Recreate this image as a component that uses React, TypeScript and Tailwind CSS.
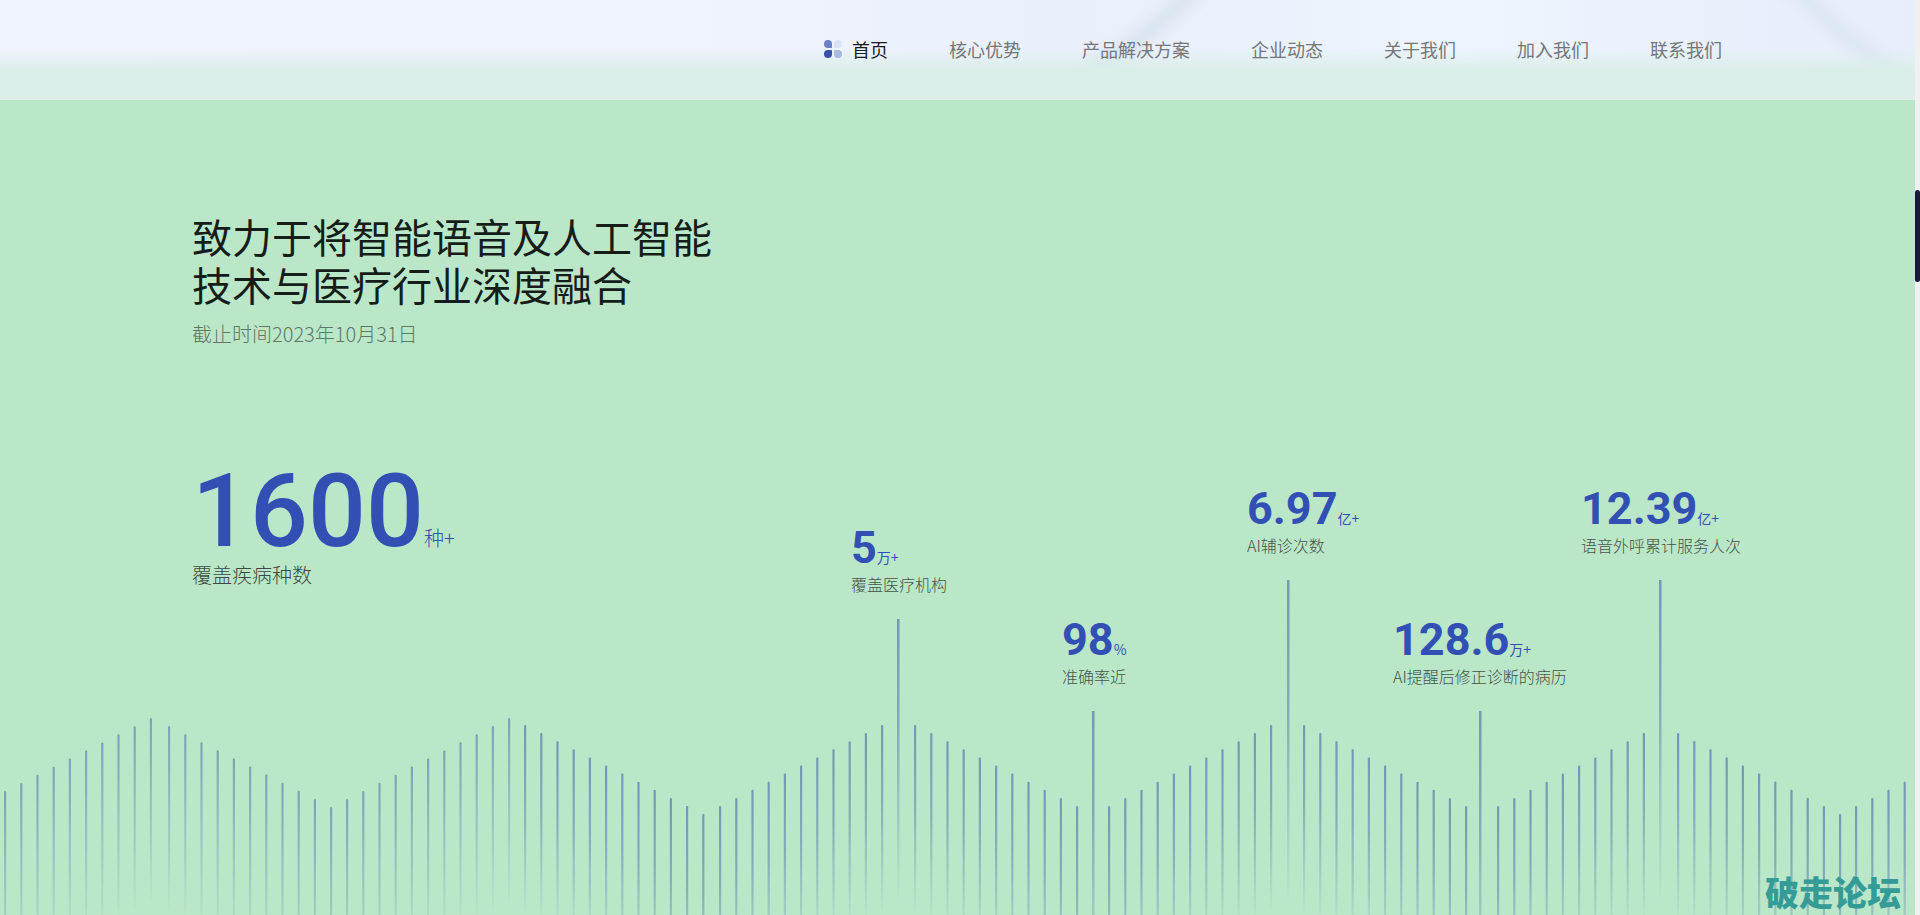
const navItems = ["核心优势", "产品解决方案", "企业动态", "关于我们", "加入我们", "联系我们"];

const stats = [
  { value: "5", unit: "万+", label: "覆盖医疗机构", offset: "pt-[39px]" },
  { value: "98", unit: "%", label: "准确率近", offset: "pt-[131px]" },
  { value: "6.97", unit: "亿+", label: "AI辅诊次数", offset: "pt-0" },
  { value: "128.6", unit: "万+", label: "AI提醒后修正诊断的病历", offset: "pt-[131px]" },
  { value: "12.39", unit: "亿+", label: "语音外呼累计服务人次", offset: "pt-0" },
];

type Run = { x: number; top: number; count: number; dir: 1 | -1; soft?: boolean };

// every run is a slope of the wave: dir -1 climbs, dir 1 falls
const runs: Run[] = [
  { x: 5, top: 211, count: 10, dir: -1, soft: true },
  { x: 169, top: 146, count: 11, dir: 1, soft: true },
  { x: 347, top: 219, count: 11, dir: -1, soft: true },
  { x: 525, top: 145, count: 12, dir: 1 },
  { x: 720, top: 226, count: 11, dir: -1 },
  { x: 915, top: 145, count: 11, dir: 1 },
  { x: 1109, top: 226, count: 11, dir: -1 },
  { x: 1304, top: 145, count: 11, dir: 1 },
  { x: 1498, top: 226, count: 10, dir: -1 },
  { x: 1678, top: 153, count: 11, dir: 1 },
  { x: 1856, top: 226, count: 4, dir: -1 },
];

const markers = [
  { x: 898, top: 39, end: 325 },
  { x: 1093, top: 131, end: 420 },
  { x: 1288, top: 0, end: 325 },
  { x: 1480, top: 131, end: 420 },
  { x: 1660, top: 0, end: 325 },
];

const bars = runs.flatMap((run) =>
  Array.from({ length: run.count }, (_, i) => ({
    x: run.x + i * 16.2,
    top: run.top + run.dir * i * 8.1,
    soft: run.soft,
  }))
);

function NavDots() {
  return (
    <svg width="18" height="18" viewBox="0 0 18 18" aria-hidden="true">
      <path d="M4 0a4 4 0 0 1 4 4v3a1 1 0 0 1-1 1H4a4 4 0 0 1 0-8z" fill="#6c80c4" />
      <path d="M14 0a4 4 0 0 1 0 8h-3a1 1 0 0 1-1-1V4a4 4 0 0 1 4-4z" fill="#dbe2f5" />
      <path d="M4 10h3a1 1 0 0 1 1 1v3a4 4 0 1 1-4-4z" fill="#3a51a9" />
      <path d="M11 10h3a4 4 0 1 1-4 4v-3a1 1 0 0 1 1-1z" fill="#aab7de" />
    </svg>
  );
}

function Wave() {
  return (
    <svg viewBox="0 0 1915 335" className="absolute bottom-0 left-0 w-full" aria-hidden="true">
      <defs>
        <linearGradient id="fade" x1="0" y1="0" x2="0" y2="1">
          <stop offset="0" stopColor="#4264a8" stopOpacity="0.6" />
          <stop offset="0.4" stopColor="#4264a8" stopOpacity="0.45" />
          <stop offset="1" stopColor="#4264a8" stopOpacity="0" />
        </linearGradient>
        <linearGradient id="fadeSoft" x1="0" y1="0" x2="0" y2="1">
          <stop offset="0" stopColor="#4264a8" stopOpacity="0.52" />
          <stop offset="1" stopColor="#4264a8" stopOpacity="0" />
        </linearGradient>
      </defs>
      {bars.map((bar) => (
        <rect key={bar.x} x={bar.x - 1} y={bar.top} width="2.2" height="190" rx="1" fill={bar.soft ? "url(#fadeSoft)" : "url(#fade)"} />
      ))}
      {markers.map((m) => (
        <rect key={m.x} x={m.x - 1} y={m.top} width="2.5" height={m.end - m.top} fill="url(#fade)" />
      ))}
    </svg>
  );
}

function Header() {
  return (
    <header className="relative h-[100px] overflow-hidden bg-[#edf2fd]">
      <svg viewBox="0 0 1915 100" preserveAspectRatio="none" className="absolute inset-0 h-full w-full" aria-hidden="true">
        <defs>
          <linearGradient id="sky" x1="0" y1="0" x2="1" y2="0">
            <stop offset="0" stopColor="#f0f4fe" />
            <stop offset="0.4" stopColor="#eff3fd" />
            <stop offset="0.54" stopColor="#e9f0fc" />
            <stop offset="0.64" stopColor="#eaf1fc" />
            <stop offset="0.76" stopColor="#eef5fe" />
            <stop offset="0.9" stopColor="#e9f0fc" />
            <stop offset="1" stopColor="#e7eefb" />
          </linearGradient>
          <linearGradient id="haze" x1="0" y1="0" x2="0" y2="1">
            <stop offset="0.48" stopColor="#dbeee9" stopOpacity="0" />
            <stop offset="0.7" stopColor="#dbeee9" />
          </linearGradient>
          <filter id="blur" x="-50%" y="-50%" width="200%" height="200%">
            <feGaussianBlur stdDeviation="7" />
          </filter>
        </defs>
        <rect width="1915" height="100" fill="url(#sky)" />
        <path d="M1202-20Q1160 30 1088 75" fill="none" stroke="#d9e4ef" strokeWidth="18" filter="url(#blur)" />
        <path d="M1785-20Q1830 25 1895 75" fill="none" stroke="#dde6f4" strokeWidth="18" filter="url(#blur)" />
        <rect width="1915" height="100" fill="url(#haze)" />
      </svg>
      <nav className="relative flex h-[98px] items-center justify-end gap-x-[61px] whitespace-nowrap pr-[193px] text-lg text-[#747679]">
        <a href="#home" className="flex items-center gap-2.5 text-[#1a1a1a]">
          <NavDots />
          首页
        </a>
        {navItems.map((item) => (
          <a key={item} href={"#" + item}>
            {item}
          </a>
        ))}
      </nav>
    </header>
  );
}

export default function App() {
  return (
    <div className="flex min-h-screen bg-[#bbe7c9] font-['Noto_Sans_CJK_SC',sans-serif]">
      <div className="relative flex min-w-0 flex-1 flex-col">
        <Header />
        <main className="relative flex-1">
          <Wave />
          <div className="relative px-48 pt-28">
            <h1 className="max-w-[530px] text-[40px] leading-[48px] text-[#161d19]">
              致力于将智能语音及人工智能技术与医疗行业深度融合
            </h1>
            <p className="mt-[11px] text-xl font-light leading-[30px] text-[#5f7767]">截止时间2023年10月31日</p>
          </div>
          <div className="relative mt-28 flex items-start pl-48">
            <div className="w-[659px] shrink-0">
              <div className="flex items-baseline leading-[100px] text-[#3250b4]">
                <span className="font-[Roboto] text-[102px] font-medium">1600</span>
                <span className="text-xl font-light">种+</span>
              </div>
              <p className="text-xl font-light text-[#3c4a41]">覆盖疾病种数</p>
            </div>
            <div className="grid flex-1 grid-cols-[211fr_185fr_146fr_188fr_334fr] whitespace-nowrap pt-6">
              {stats.map((s) => (
                <div key={s.label} className={s.offset}>
                  <div className="flex items-baseline leading-[48px] text-[#3250b4]">
                    <span className="font-[Roboto] text-[45px] font-bold">{s.value}</span>
                    <span className="text-sm">{s.unit}</span>
                  </div>
                  <p className="text-base font-light text-[#445549]">{s.label}</p>
                </div>
              ))}
            </div>
          </div>
        </main>
        <div className="absolute bottom-0 right-3.5 text-[34px] font-black leading-[46px] text-[#359b96]">破走论坛</div>
      </div>
      <div className="w-[5px] bg-[#f0f0f0] pt-[190px]">
        <div className="h-[92px] rounded-sm bg-[#17183b]" />
      </div>
    </div>
  );
}
